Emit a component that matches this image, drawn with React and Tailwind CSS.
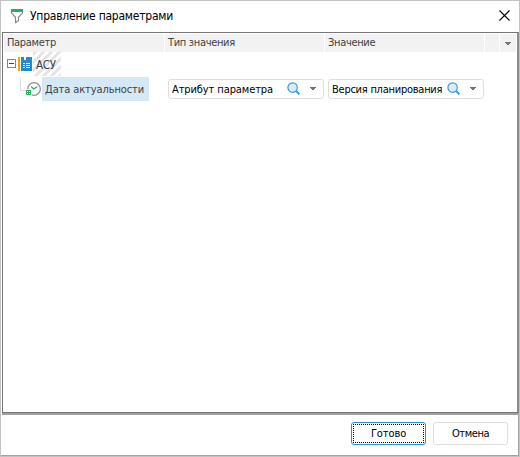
import React from "react";

const FONT = "font-['DejaVu_Sans_Condensed','DejaVu_Sans',sans-serif] [font-stretch:condensed]";

function Arrow() {
  return (
    <svg width="6" height="3" viewBox="0 0 6 3" shapeRendering="crispEdges" className="block shrink-0">
      <path d="M0 0H6V1H5V2H4V3H2V2H1V1H0Z" fill="#737373" />
    </svg>
  );
}

function Search() {
  return (
    <svg width="14" height="14" viewBox="0 0 14 14" className="block shrink-0">
      <circle cx="5.6" cy="5.6" r="4.7" fill="#dcecf7" stroke="#3b9ad3" strokeWidth="1.2" />
      <path d="M9 9L12.4 12.4" stroke="#3b9ad3" strokeWidth="1.8" />
    </svg>
  );
}

function Combo({ label, tracking }) {
  return (
    <div className="flex h-5 w-[156px] items-center rounded-[3px] border border-[#dedede] bg-white text-black">
      <span className={`w-[118px] shrink-0 pt-px pl-[3px] ${tracking}`}>{label}</span>
      <Search />
      <span className="-mt-px ml-[9px]"><Arrow /></span>
    </div>
  );
}

export default function App() {
  return (
    <div className={`flex h-[457px] w-[520px] flex-col overflow-hidden border border-[#c2c2c2] bg-white text-[11px] leading-[14px] whitespace-nowrap text-[#404040] ${FONT}`}>
      <header className="flex h-[31px] shrink-0 items-center pr-[9px] pl-[9px]">
        <svg width="14" height="16" viewBox="0 0 14 16" className="-mt-[2px] block">
          <path d="M1.5 3V5L5.5 9.3V14.7L8.5 12.5V9.3L12.5 5V3" fill="#fff" stroke="#858585" strokeWidth="1.1" />
          <path d="M1 1H13V4H1Z" fill="#27ae60" />
        </svg>
        <h1 className="-mt-px ml-[6px] text-[12px] leading-4 font-normal tracking-[-0.23px] text-black">Управление параметрами</h1>
        <svg width="11" height="11" viewBox="0 0 11 11" className="-mt-[2px] ml-auto block">
          <path d="M.5 .5L10.5 10.5M10.5 .5L.5 10.5" stroke="#000" strokeWidth="1.1" />
        </svg>
      </header>
      <main className="ml-px flex h-[381px] w-[517px] shrink-0 flex-col border-y border-r-2 border-l border-[#767676] border-r-[#8b8b8b]">
        <div className="flex h-[19px] shrink-0 gap-px pt-px pr-px pl-px tracking-[-0.32px]">
          <div className="w-[160px] bg-[#f2f2f2] pt-[2px] pl-[3px]">Параметр</div>
          <div className="w-[159px] bg-[#f2f2f2] pt-[2px] pl-[3px]">Тип значения</div>
          <div className="w-[159px] bg-[#f2f2f2] pt-[2px] pl-[3px]">Значение</div>
          <div className="w-[14px] bg-[#f2f2f2]" />
          <div className="flex flex-1 items-center justify-center bg-[#f2f2f2]"><Arrow /></div>
        </div>
        <div className="flex h-6 items-center pl-[4px]">
          <svg width="9" height="9" viewBox="0 0 9 9" shapeRendering="crispEdges" className="-mt-px block">
            <path d="M.5 .5H8.5V8.5H.5Z" fill="#fff" stroke="#858585" />
            <path d="M2 4H7V5H2Z" fill="#444" />
          </svg>
          <svg width="14" height="14" viewBox="0 0 14 14" shapeRendering="crispEdges" className="ml-[2px] block">
            <path d="M0 0H2V14H0Z" fill="#f5a31a" />
            <path d="M3 0H6V3H8V0H14V14H3Z" fill="#248bcb" />
            <path d="M5 6H7V7H5ZM8 6H12V7H8ZM5 8H7V9H5ZM8 8H12V9H8ZM5 10H7V11H5ZM8 10H12V11H8Z" fill="#fff" />
          </svg>
          <div className="ml-px flex h-6 w-7 items-center bg-[repeating-linear-gradient(135deg,#e4e4e4_0px,#e4e4e4_2.83px,#fff_2.83px,#fff_5.66px)] pt-px pl-[3px] text-[11.5px] tracking-[-0.3px]">АСУ</div>
        </div>
        <div className="mt-px flex h-6 items-center">
          <div className="flex w-[163px] items-center pl-[17px]">
            <div className="-mt-[10px] h-[13px] w-[6px] border-b border-l border-[#dedede]" />
            <svg width="15" height="15" viewBox="0 0 15 15" className="mr-px block">
              <circle cx="8" cy="7" r="6.3" fill="#fff" stroke="#929292" strokeWidth="1.3" />
              <path d="M5.2 4.5L7.8 7L11.5 4.5" fill="none" stroke="#27ae60" strokeWidth="1.2" />
              <g shapeRendering="crispEdges">
                <path d="M0 7H6V14H0Z" fill="#fff" />
                <path d="M0 8H5V13H0Z" fill="#27ae60" />
                <path d="M1 9H2V10H1ZM3 9H4V10H3ZM1 11H2V12H1ZM3 11H4V12H3Z" fill="#fff" />
              </g>
            </svg>
            <div className="flex h-6 w-[107px] items-center bg-[#d5e8f5] pt-px pl-[3px] tracking-[-0.1px]">Дата актуальности</div>
          </div>
          <div className="ml-[2px] flex gap-1">
            <Combo label="Атрибут параметра" tracking="tracking-[-0.1px]" />
            <Combo label="Версия планирования" tracking="tracking-[-0.25px]" />
          </div>
        </div>
      </main>
      <div className="ml-px h-[2px] w-[517px] shrink-0 bg-[#a0a0a0]" />
      <footer className="flex h-[41px] w-[518px] shrink-0 gap-[7px] border-r border-b border-[#a3a3a3] pt-[7px] pl-[350px] text-black">
        <button className="h-[23px] w-[75px] shrink-0 rounded-[3px] border border-[#2d8fc9] p-px">
          <span className="flex h-full items-center justify-center border border-dotted border-black pt-px tracking-[-0.1px]">Готово</span>
        </button>
        <button className="h-[23px] w-[75px] shrink-0 rounded-[3px] border border-[#dedede] pt-px tracking-[-0.4px]">Отмена</button>
      </footer>
    </div>
  );
}
